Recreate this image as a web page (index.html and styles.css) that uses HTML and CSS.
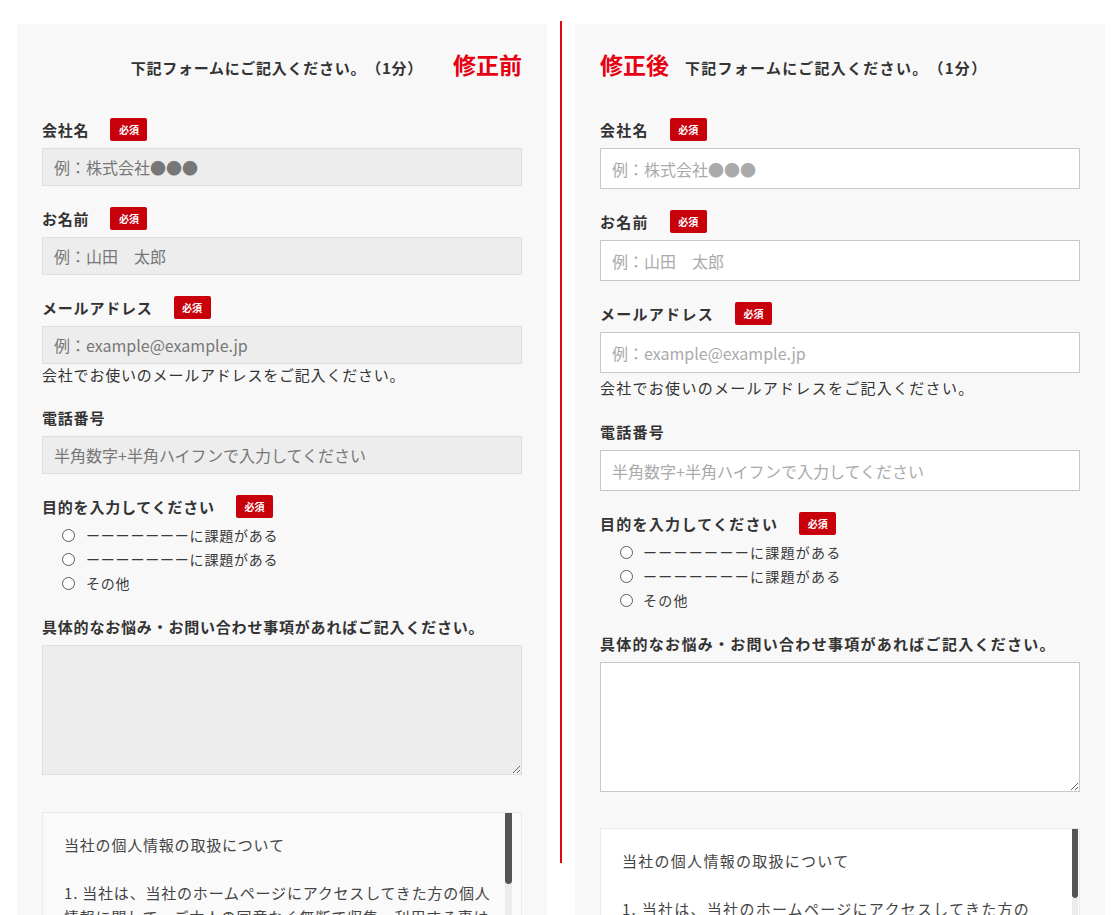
FILE: index.html
```html
<!DOCTYPE html>
<html lang="ja">
<head>
<meta charset="utf-8">
<title>フォーム 修正前・修正後</title>
<link rel="stylesheet" href="styles.css">
</head>
<body>
<div class="page">
  <section class="panel panel--before">
    <div class="heading">
      <span class="heading-text">下記フォームにご記入ください。（1分）</span>
      <span class="heading-tag heading-tag--before">修正前</span>
    </div>

    <div class="field">
      <div class="label-row"><span class="label">会社名</span><span class="badge">必須</span></div>
      <input class="input" type="text" placeholder="例：株式会社●●●">
    </div>
    <div class="field">
      <div class="label-row"><span class="label">お名前</span><span class="badge">必須</span></div>
      <input class="input" type="text" placeholder="例：山田　太郎">
    </div>
    <div class="field">
      <div class="label-row"><span class="label">メールアドレス</span><span class="badge">必須</span></div>
      <input class="input" type="text" placeholder="例：example@example.jp">
      <p class="note">会社でお使いのメールアドレスをご記入ください。</p>
    </div>
    <div class="field">
      <div class="label-row"><span class="label">電話番号</span></div>
      <input class="input" type="text" placeholder="半角数字+半角ハイフンで入力してください">
    </div>
    <div class="field">
      <div class="label-row"><span class="label">目的を入力してください</span><span class="badge">必須</span></div>
      <div class="radios">
        <label class="radio-item"><input class="radio" type="radio" name="p1">ーーーーーーーに課題がある</label>
        <label class="radio-item"><input class="radio" type="radio" name="p1">ーーーーーーーに課題がある</label>
        <label class="radio-item"><input class="radio" type="radio" name="p1">その他</label>
      </div>
    </div>
    <div class="field field--wide">
      <div class="label-row"><span class="label">具体的なお悩み・お問い合わせ事項があればご記入ください。</span></div>
      <textarea class="textarea"></textarea>
    </div>

    <div class="privacy">
      <div class="privacy-body">
        <p class="privacy-title">当社の個人情報の取扱について</p>
        <p>1. 当社は、当社のホームページにアクセスしてきた方の個人情報に関して、ご本人の同意なく無断で収集・利用する事はありません。</p>
        <p>2. 当社は、ご本人からご提供いただいた個人情報を、お問い合わせへの回答およびサービスのご案内の目的にのみ利用いたします。</p>
        <p>3. 当社は、法令に基づく場合を除き、ご本人の同意なく個人情報を第三者に提供することはありません。</p>
      </div>
      <div class="scrollbar"><div class="scrollbar-thumb"></div></div>
    </div>
  </section>

  <div class="divider"></div>

  <section class="panel panel--after">
    <div class="heading heading--after">
      <span class="heading-tag heading-tag--after">修正後</span>
      <span class="heading-text">下記フォームにご記入ください。（1分）</span>
    </div>

    <div class="field">
      <div class="label-row"><span class="label">会社名</span><span class="badge">必須</span></div>
      <input class="input" type="text" placeholder="例：株式会社●●●">
    </div>
    <div class="field">
      <div class="label-row"><span class="label">お名前</span><span class="badge">必須</span></div>
      <input class="input" type="text" placeholder="例：山田　太郎">
    </div>
    <div class="field">
      <div class="label-row"><span class="label">メールアドレス</span><span class="badge">必須</span></div>
      <input class="input" type="text" placeholder="例：example@example.jp">
      <p class="note">会社でお使いのメールアドレスをご記入ください。</p>
    </div>
    <div class="field">
      <div class="label-row"><span class="label">電話番号</span></div>
      <input class="input" type="text" placeholder="半角数字+半角ハイフンで入力してください">
    </div>
    <div class="field">
      <div class="label-row"><span class="label">目的を入力してください</span><span class="badge">必須</span></div>
      <div class="radios">
        <label class="radio-item"><input class="radio" type="radio" name="p2">ーーーーーーーに課題がある</label>
        <label class="radio-item"><input class="radio" type="radio" name="p2">ーーーーーーーに課題がある</label>
        <label class="radio-item"><input class="radio" type="radio" name="p2">その他</label>
      </div>
    </div>
    <div class="field field--wide">
      <div class="label-row"><span class="label">具体的なお悩み・お問い合わせ事項があればご記入ください。</span></div>
      <textarea class="textarea"></textarea>
    </div>

    <div class="privacy">
      <div class="privacy-body">
        <p class="privacy-title">当社の個人情報の取扱について</p>
        <p>1. 当社は、当社のホームページにアクセスしてきた方の個人情報に関して、ご本人の同意なく無断で収集・利用する事はありません。</p>
        <p>2. 当社は、ご本人からご提供いただいた個人情報を、お問い合わせへの回答およびサービスのご案内の目的にのみ利用いたします。</p>
        <p>3. 当社は、法令に基づく場合を除き、ご本人の同意なく個人情報を第三者に提供することはありません。</p>
      </div>
      <div class="scrollbar"><div class="scrollbar-thumb"></div></div>
    </div>
  </section>
</div>
</body>
</html>
```

FILE: styles.css
```css
* {
  box-sizing: border-box;
}

html, body {
  margin: 0;
  padding: 0;
  background: #ffffff;
}

body {
  font-family: "Noto Sans CJK JP", "Noto Sans", sans-serif;
  color: #333333;
  overflow: hidden;
}

.page {
  display: flex;
  align-items: flex-start;
  padding-left: 17px;
}

.panel {
  width: 530px;
  margin-top: 24px;
  padding: 24px 25px 40px;
  background: #f8f8f8;
}

.panel--before {
  letter-spacing: 0.05em;
}

.panel--after {
  letter-spacing: 0.08em;
}

.divider {
  width: 2px;
  height: 842px;
  margin: 21px 13px 0;
  background: #dd0a0a;
}

/* heading */
.heading {
  display: flex;
  justify-content: flex-end;
  align-items: baseline;
  height: 32px;
  margin-bottom: 38px;
}

.heading--after {
  justify-content: flex-start;
}

.heading-text {
  font-size: 15px;
  font-weight: 700;
  line-height: 20px;
  color: #333333;
  text-spacing-trim: space-all;
}

.panel--before .heading-text {
  letter-spacing: 0.05em;
}

.heading-tag {
  font-size: 23px;
  font-weight: 700;
  line-height: 32px;
  color: #e60012;
  letter-spacing: 0;
}

.heading-tag--before {
  margin-left: 30px;
}

.heading-tag--after {
  margin-right: 16px;
}

/* fields */
.field {
  margin-bottom: 21px;
}

.field--wide {
  margin-bottom: 37px;
}

.panel--after .field--wide {
  margin-bottom: 36px;
}

.label-row {
  display: flex;
  align-items: center;
  min-height: 22px;
  margin-bottom: 7px;
}

.label {
  font-size: 15px;
  font-weight: 700;
  line-height: 22px;
  color: #333333;
}

.badge {
  display: flex;
  align-items: center;
  justify-content: center;
  width: 37px;
  height: 23px;
  margin-left: 21px;
  border-radius: 2px;
  background: #c7000b;
  color: #ffffff;
  font-size: 10px;
  font-weight: 700;
  letter-spacing: 0;
}

.input {
  display: block;
  width: 100%;
  font-family: "Noto Sans CJK JP", "Noto Sans", sans-serif;
  font-size: 16px;
  letter-spacing: 0;
  color: #333333;
  outline: none;
}

.panel--before .input {
  height: 38px;
  padding: 0 11px;
  background: #ededed;
  border: 1px solid #dedede;
  border-radius: 0;
}

.panel--after .input {
  height: 41px;
  padding: 0 11px;
  background: #ffffff;
  border: 1px solid #c8c8c8;
  border-radius: 0;
}

.panel--before .input::placeholder {
  color: #777777;
}

.panel--after .input::placeholder {
  color: #aaaaaa;
}

.note {
  margin: 0;
  font-size: 15px;
  line-height: 22px;
  color: #333333;
}

.panel--after .note {
  margin-top: 3px;
  line-height: 24px;
}

/* radios */
.radios {
  margin-top: -2px;
  padding-left: 20px;
}

.radio-item {
  display: flex;
  align-items: center;
  height: 24px;
  font-size: 14px;
  color: #3a3a3a;
}

.radio {
  appearance: none;
  -webkit-appearance: none;
  width: 13px;
  height: 13px;
  margin: 0 11px 0 0;
  border: 1px solid #5a5a5a;
  border-radius: 50%;
  background: #ffffff;
  flex: none;
}

.panel--after .radio {
  margin-right: 10px;
}

/* textarea */
.textarea {
  display: block;
  width: 100%;
  height: 130px;
  margin: 0;
  font-family: "Noto Sans CJK JP", "Noto Sans", sans-serif;
  font-size: 15px;
  outline: none;
  border-radius: 0;
}

.panel--before .textarea {
  background: #ededed;
  border: 1px solid #dedede;
}

.panel--after .textarea {
  background: #ffffff;
  border: 1px solid #c8c8c8;
}

/* privacy box */
.privacy {
  display: flex;
  height: 164px;
  overflow: hidden;
  font-size: 15px;
  line-height: 24px;
  color: #444444;
  border: 1px solid #ebebeb;
}

.panel--before .privacy {
  background: #fafafa;
}

.panel--after .privacy {
  background: #ffffff;
}

.privacy-body {
  flex: 1;
  min-width: 0;
}

.panel--before .privacy-body {
  padding: 20px 0 20px 21px;
}

.panel--after .privacy-body {
  padding: 20px 30px 20px 21px;
}

.privacy p {
  margin: 0;
}

.privacy .privacy-title {
  margin-bottom: 24px;
}

.scrollbar {
  flex: none;
  display: flex;
  flex-direction: column;
}

.panel--before .scrollbar {
  width: 18px;
  padding: 0 9px 0 2px;
}

.panel--after .scrollbar {
  width: 8px;
  padding: 0 1px;
}

.scrollbar::after {
  content: "";
  flex: 1;
  background: #ececec;
}

.scrollbar-thumb {
  flex: none;
  height: 71px;
  background: #555555;
  border-radius: 0 0 4px 4px;
}

.panel--after .scrollbar-thumb {
  height: 69px;
}
```
